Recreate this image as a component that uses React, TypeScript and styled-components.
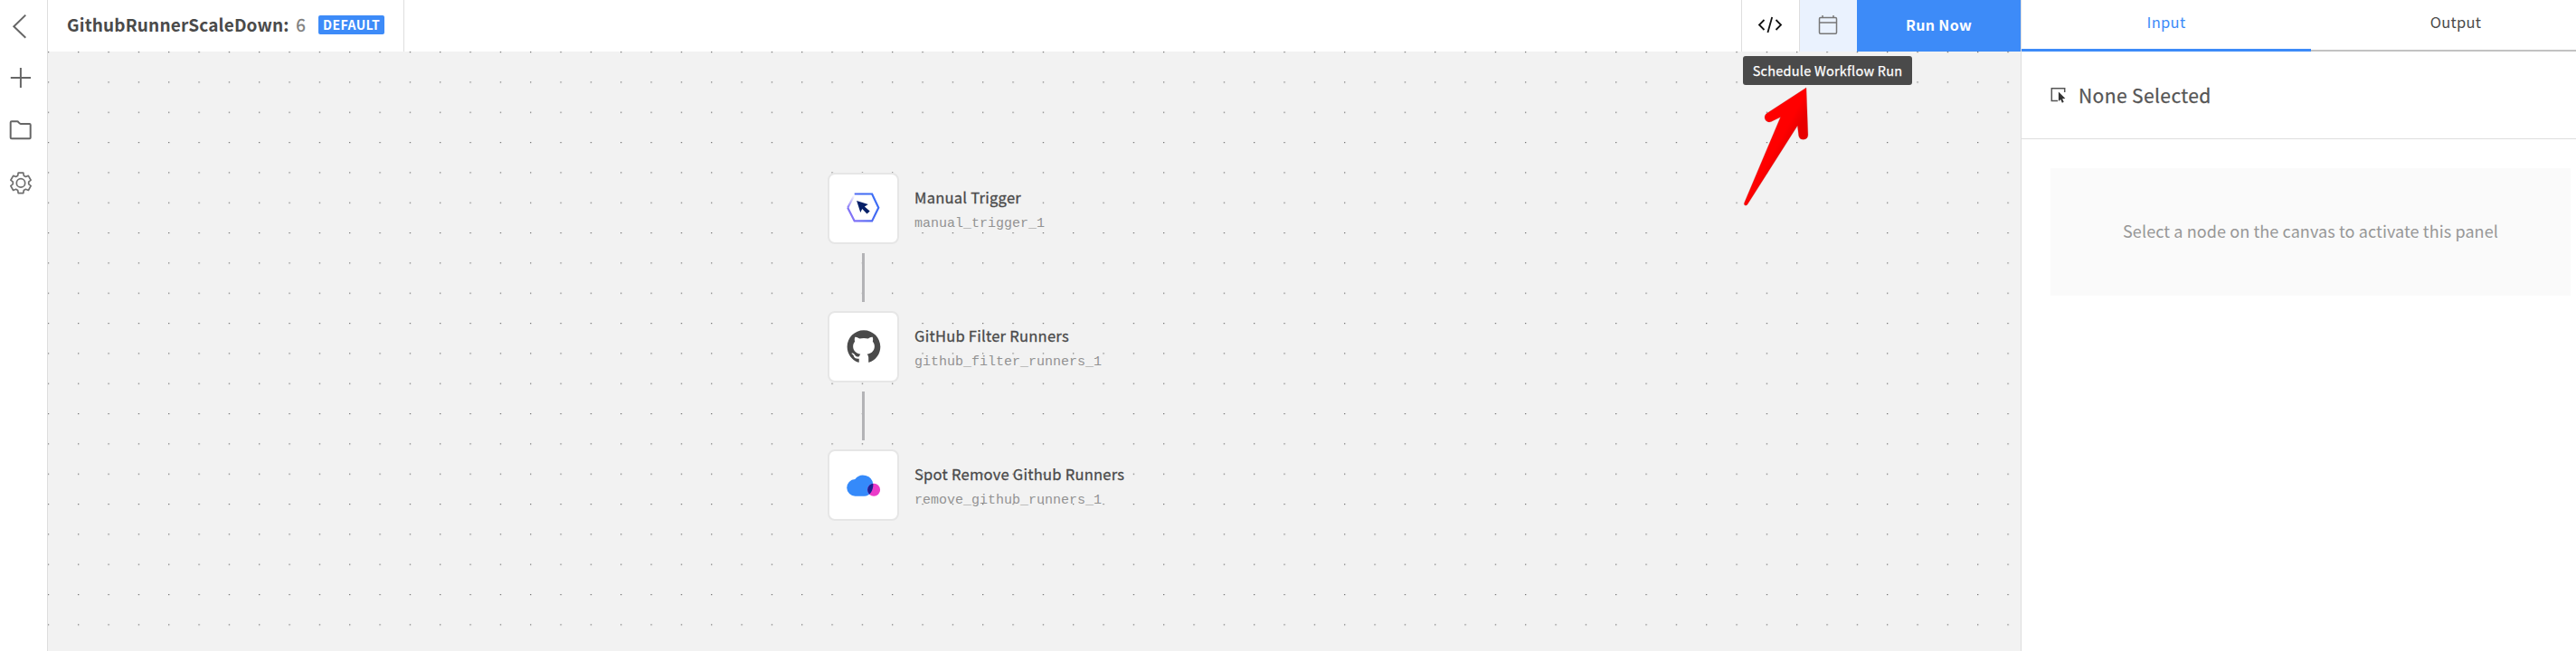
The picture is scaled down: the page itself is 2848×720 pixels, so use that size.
import React from 'react';
import styled, { createGlobalStyle, css } from 'styled-components';
import { AiOutlineGithub } from 'react-icons/ai';

const blue = '#3d8bf8';
const line = '#dedede';

const GlobalStyle = createGlobalStyle`
  * { box-sizing: border-box; }
  body {
    margin: 0;
    overflow: hidden;
    background: #fff;
    color: #4a4a4a;
    font-family: "Noto Sans CJK SC", "Noto Sans", sans-serif;
  }
  svg { display: block; flex: none; }
`;

const Shell = styled.div`
  display: flex;
  width: 100vw;
  height: 100vh;
  overflow: hidden;
`;

const Sidebar = styled.nav`
  flex: none;
  width: 53px;
  padding-right: 6px;
  border-right: 1px solid ${line};
  background: #fff;
`;

const SidebarButton = styled.div<{ $first?: boolean }>`
  display: flex;
  align-items: center;
  justify-content: center;
  height: ${p => (p.$first ? 57 : 58)}px;
`;

const Workspace = styled.main`
  position: relative;
  display: flex;
  flex-direction: column;
  flex: none;
  width: 2181px;
`;

const Header = styled.header`
  display: flex;
  flex: none;
  height: 57px;
  background: #fff;
`;

const TitleBlock = styled.div`
  display: flex;
  align-items: center;
  width: 394px;
  padding: 0 0 2px 21px;
  border-right: 1px solid ${line};
`;

const Title = styled.h1`
  margin: 0;
  padding-bottom: 1px;
  font-size: 19px;
  line-height: 28px;
  font-weight: 700;
  letter-spacing: 0.14px;
  white-space: nowrap;
`;

const Version = styled.span`
  width: 25px;
  margin-left: 7.5px;
  padding-bottom: 1px;
  font-size: 19px;
  line-height: 28px;
  color: #7d7d7d;
  -webkit-text-stroke: 0.3px #7d7d7d;
`;

const Badge = styled.span`
  width: 73px;
  height: 21px;
  border-radius: 2px;
  background: ${blue};
  color: #fff;
  text-align: center;
  font-size: 14px;
  line-height: 20px;
  font-weight: 700;
  letter-spacing: 0.4px;
`;

const Actions = styled.div`
  display: flex;
  margin-left: auto;
`;

const IconButton = styled.div<{ $active?: boolean }>`
  display: flex;
  align-items: center;
  justify-content: center;
  width: 64px;
  padding: 0 2px 1px 0;
  border-left: 1px solid ${line};
  background: ${p => (p.$active ? '#eaf2fe' : '#fff')};
`;

const RunButton = styled.div`
  width: 181px;
  background: ${blue};
  color: #fff;
  text-align: center;
  font-size: 16px;
  line-height: 54px;
  font-weight: 700;
  letter-spacing: 0.35px;
`;

const Tooltip = styled.div`
  position: absolute;
  left: 1874px;
  top: 62px;
  width: 187px;
  height: 32px;
  border-radius: 3px;
  background: #4a4a4a;
  color: #fff;
  text-align: center;
  font-size: 14.5px;
  line-height: 31px;
  letter-spacing: 0.25px;
  white-space: nowrap;
  -webkit-text-stroke: 0.25px #fff;
`;

const Pointer = styled.svg`
  position: absolute;
  left: 1872px;
  top: 94px;
`;

const Canvas = styled.section`
  position: relative;
  flex: 1;
  overflow: hidden;
  background: #f2f2f2;
`;

const Grid = styled.svg`
  position: absolute;
  inset: 0;
  width: 100%;
  height: 100%;
`;

const Flow = styled.div`
  position: relative;
  display: flex;
  flex-direction: column;
  gap: 10px;
  padding: 133.6px 0 0 862px;
`;

const Step = styled.div`
  display: flex;
  align-items: center;
  gap: 17px;
  height: 79px;
`;

const Card = styled.div`
  display: flex;
  align-items: center;
  justify-content: center;
  flex: none;
  width: 79px;
  height: 79px;
  border: 2px solid #e6e6e6;
  border-radius: 8px;
  background: #fff;
`;

const StepText = styled.div`
  display: flex;
  flex-direction: column;
  gap: 7px;
  padding-top: 2.5px;
  white-space: nowrap;
`;

const StepName = styled.div`
  font-size: 16.5px;
  line-height: 26px;
  letter-spacing: 0.26px;
  -webkit-text-stroke: 0.3px #4a4a4a;
`;

const StepId = styled.div`
  font-family: "Liberation Mono", monospace;
  font-size: 15px;
  line-height: 20px;
  color: #929292;
`;

const Connector = styled.div`
  width: 3px;
  height: 54.3px;
  margin-left: 38px;
  background: #b3b3b6;
`;

const Inspector = styled.aside`
  flex: 1;
  min-width: 0;
  overflow: hidden;
  border-left: 1px solid ${line};
  background: #fff;
`;

const Tabs = styled.div`
  display: flex;
  width: 640px;
  height: 57px;
`;

const Tab = styled.div<{ $active?: boolean }>`
  width: 320px;
  height: 57px;
  text-align: center;
  font-size: 16.5px;
  line-height: 48px;
  letter-spacing: 0.3px;
  border-bottom: 2px solid #c2c2c2;
  ${p => p.$active && css`
    color: ${blue};
    border-bottom: 3px solid ${blue};
  `}
`;

const Selection = styled.div`
  display: flex;
  align-items: center;
  gap: 12px;
  height: 97px;
  padding: 0 0 1px 32px;
  border-bottom: 1px solid ${line};
`;

const SelectionName = styled.h2`
  margin: 0;
  font-size: 21px;
  line-height: 30px;
  font-weight: 400;
  letter-spacing: 0.4px;
  color: #555;
  -webkit-text-stroke: 0.25px #555;
`;

const EmptyState = styled.div`
  width: 575px;
  height: 141px;
  margin: 32px 0 0 32px;
  background: #fafafa;
  color: #979797;
  text-align: center;
  font-size: 18px;
  line-height: 139px;
  letter-spacing: 0.1px;
  white-space: nowrap;
`;

const polar = (radius: number, degrees: number) => {
  const a = (degrees * Math.PI) / 180;
  return `${(13 + radius * Math.cos(a)).toFixed(2)} ${(14 + radius * Math.sin(a)).toFixed(2)}`;
};

const gearPath =
  'M' +
  [-90, -30, 30, 90, 150, 210]
    .map(t => [polar(8.8, t - 22), polar(11.6, t - 14), polar(11.6, t + 14), polar(8.8, t + 22)].join('L'))
    .join('L') +
  'Z';

const BackIcon = () => (
  <svg width="26" height="28" fill="none" stroke="#666" strokeWidth="2">
    <path d="M18.3 1.6 5.3 14.3l13 12.4" />
  </svg>
);

const PlusIcon = () => (
  <svg width="26" height="26" fill="none" stroke="#666" strokeWidth="2">
    <path d="M1.8 13h22.2M12.9 2v22" />
  </svg>
);

const FolderIcon = () => (
  <svg width="26" height="26" fill="none" stroke="#666" strokeWidth="2" strokeLinejoin="round">
    <path d="M1.7 4.5q0-1.2 1.2-1.2h6.2q.8 0 1.3.8l1 1.100q.6.7 1.4.7h9.8q1.1 0 1.1 1.1v14.2q0 1.1-1.1 1.1H2.9q-1.2 0-1.2-1.1z" />
  </svg>
);

const GearIcon = () => (
  <svg width="26" height="30" viewBox="0 -1.4 26 30" fill="none" stroke="#6f6f6f" strokeWidth="1.7" strokeLinejoin="round">
    <path d={gearPath} />
    <circle cx="13" cy="14" r="4.7" />
  </svg>
);

const CodeIcon = () => (
  <svg width="28" height="22" fill="none" stroke="#111" strokeWidth="1.8">
    <path d="M7.5 5 2 10.5 7.5 16M20.5 5 26 10.5 20.5 16M16.2 2 11.4 19" />
  </svg>
);

const CalendarIcon = () => (
  <svg width="22" height="24" fill="none" stroke="#777" strokeWidth="1.5">
    <rect x="1.5" y="3.5" width="19" height="17.7" rx="1.2" />
    <path d="M1.5 8.9h19M5 1v2.5M17 1v2.5" />
  </svg>
);

const ManualTriggerIcon = () => (
  <svg width="40" height="40" fill="none">
    <defs>
      <linearGradient id="hex" x1="2" y1="30" x2="34" y2="10" gradientUnits="userSpaceOnUse">
        <stop offset="0" stopColor="#8f75f8" />
        <stop offset="0.7" stopColor="#4169f2" />
        <stop offset="1" stopColor="#3e6ff6" />
      </linearGradient>
      <linearGradient id="fade" x1="2.2" y1="19.8" x2="9.7" y2="6" gradientUnits="userSpaceOnUse">
        <stop offset="0" stopColor="#8878f6" />
        <stop offset="1" stopColor="#8878f6" stopOpacity="0" />
      </linearGradient>
    </defs>
    <path d="M9.7 4.500H29.1L36.3 19.8 29.1 34.4H9.7L2.2 19.8" stroke="url(#hex)" strokeWidth="2.2" />
    <path d="M2.2 19.8 9.4 6" stroke="url(#fade)" strokeWidth="2.2" />
    <path d="M12.1 12.1 24.8 15.9 20.9 18.4 26.7 23.5 23.5 26.6 18.2 21 16.3 25z" fill="#062068" />
  </svg>
);

const cloudPath =
  'M10.7 31.7A9.3 9.3 0 0 1 10.3 13.1 11.2 11.2 0 0 1 30.4 18.5C30.4 25 27.5 31.7 20.5 31.7Z';

const SpotIcon = () => (
  <svg width="40" height="40">
    <clipPath id="cloud"><path d={cloudPath} /></clipPath>
    <path d={cloudPath} fill="#358afa" />
    <circle cx="31.1" cy="24.7" r="7" fill="#eb3bc9" />
    <circle cx="31.1" cy="24.7" r="7" fill="#1c2191" clipPath="url(#cloud)" />
  </svg>
);

const SelectIcon = () => (
  <svg width="19" height="18">
    <path d="M15.7 6V1.7H1.3V15.5H8" fill="none" stroke="#555" strokeWidth="1.5" />
    <path d="M8.9 5.5v10.6l2.3-2 1.7 3.6 1.8-.9-1.6-3.5 3.3-.3z" fill="#333" />
  </svg>
);

const steps = [
  { name: 'Manual Trigger', id: 'manual_trigger_1', icon: <ManualTriggerIcon /> },
  { name: 'GitHub Filter Runners', id: 'github_filter_runners_1', icon: <AiOutlineGithub size={42} color="#4a4a4a" /> },
  { name: 'Spot Remove Github Runners', id: 'remove_github_runners_1', icon: <SpotIcon /> },
];

export default function App() {
  return (
    <Shell>
      <GlobalStyle />
      <Sidebar>
        <SidebarButton $first><BackIcon /></SidebarButton>
        <SidebarButton><PlusIcon /></SidebarButton>
        <SidebarButton><FolderIcon /></SidebarButton>
        <SidebarButton><GearIcon /></SidebarButton>
      </Sidebar>

      <Workspace>
        <Header>
          <TitleBlock>
            <Title>GithubRunnerScaleDown:</Title>
            <Version>6</Version>
            <Badge>DEFAULT</Badge>
          </TitleBlock>
          <Actions>
            <IconButton><CodeIcon /></IconButton>
            <IconButton $active><CalendarIcon /></IconButton>
            <RunButton>Run Now</RunButton>
          </Actions>
        </Header>

        <Canvas>
          <Grid>
            <defs>
              <pattern id="dots" x="-0.2" y="0" width="33.333" height="33.333" patternUnits="userSpaceOnUse">
                <rect x="0" y="0" width="1.2" height="1.2" fill="#666" />
              </pattern>
            </defs>
            <rect width="100%" height="100%" fill="url(#dots)" />
          </Grid>
          <Flow>
            {steps.map((step, i) => (
              <React.Fragment key={step.id}>
                {i > 0 && <Connector />}
                <Step>
                  <Card>{step.icon}</Card>
                  <StepText>
                    <StepName>{step.name}</StepName>
                    <StepId>{step.id}</StepId>
                  </StepText>
                </Step>
              </React.Fragment>
            ))}
          </Flow>
        </Canvas>

        <Tooltip>Schedule Workflow Run</Tooltip>
        <Pointer width="80" height="140">
          <defs>
            <linearGradient id="arrow" x1="40" y1="50" x2="62" y2="62" gradientUnits="userSpaceOnUse">
              <stop offset="0.3" stopColor="#ff0000" />
              <stop offset="0.8" stopColor="#e80000" />
            </linearGradient>
          </defs>
          <path
            d="M72 3 28.5 31.3A5.2 5.2 0 0 0 33.3 40.5L43.5 35.5 3.4 130.5C2.6 133 5.5 134.5 7.2 131.8L62.3 45 63.6 56A5.2 5.2 0 0 0 73.9 55Z"
            fill="url(#arrow)"
            stroke="#a33"
            strokeOpacity="0.5"
            strokeWidth="0.5"
          />
        </Pointer>
      </Workspace>

      <Inspector>
        <Tabs>
          <Tab $active>Input</Tab>
          <Tab>Output</Tab>
        </Tabs>
        <Selection>
          <SelectIcon />
          <SelectionName>None Selected</SelectionName>
        </Selection>
        <EmptyState>Select a node on the canvas to activate this panel</EmptyState>
      </Inspector>
    </Shell>
  );
}
